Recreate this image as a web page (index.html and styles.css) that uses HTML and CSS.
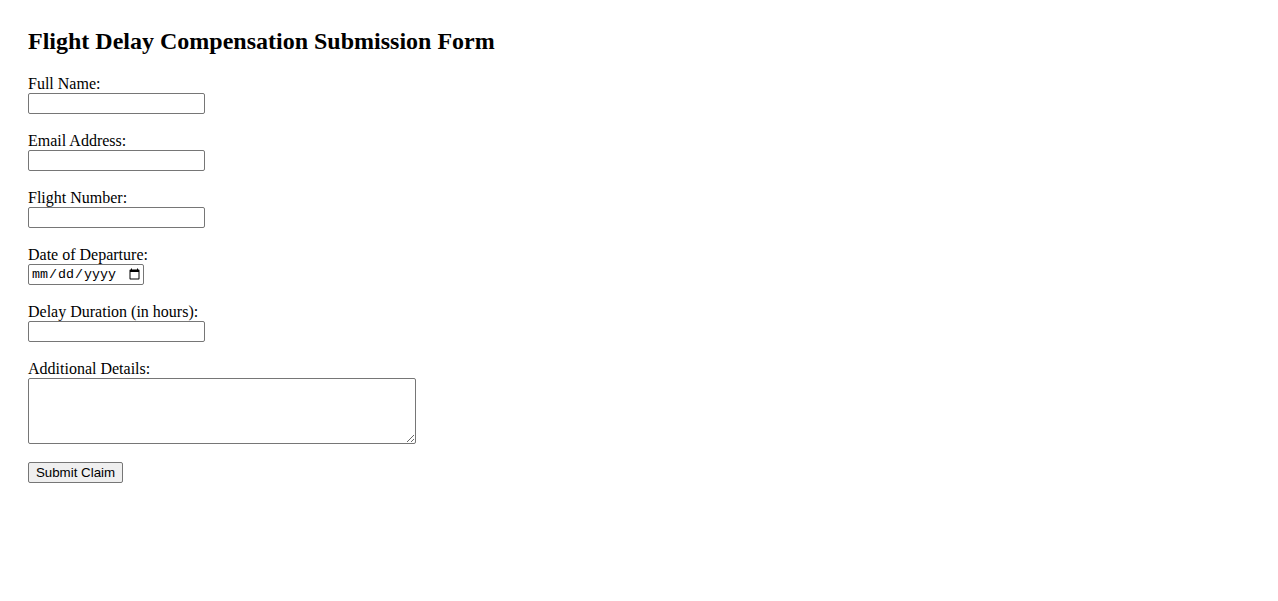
FILE: index.html
```html
<!DOCTYPE html>
<html lang="en">
<head>
<meta charset="utf-8">
<title>Flight Delay Compensation Submission Form</title>
<link rel="stylesheet" href="styles.css">
</head>
<body>
<div class="page">
  <h2 class="title">Flight Delay Compensation Submission Form</h2>
  <form class="claim-form">
    <div class="field">
      <label class="label" for="name">Full Name:</label>
      <input class="text-input" type="text" id="name">
    </div>
    <div class="field">
      <label class="label" for="email">Email Address:</label>
      <input class="text-input" type="email" id="email">
    </div>
    <div class="field">
      <label class="label" for="flight">Flight Number:</label>
      <input class="text-input" type="text" id="flight">
    </div>
    <div class="field">
      <label class="label" for="date">Date of Departure:</label>
      <input class="date-input" type="date" id="date">
    </div>
    <div class="field">
      <label class="label" for="delay">Delay Duration (in hours):</label>
      <input class="text-input" type="number" id="delay">
    </div>
    <div class="field field-area">
      <label class="label" for="details">Additional Details:</label>
      <textarea class="area" id="details"></textarea>
    </div>
    <button class="submit" type="submit">Submit Claim</button>
  </form>
</div>
</body>
</html>
```

FILE: styles.css
```css
html, body {
  margin: 0;
  padding: 0;
  background: #ffffff;
}

.page {
  padding: 28px;
  font-family: "Liberation Serif", "Times New Roman", serif;
  font-size: 16px;
  color: #000000;
}

.title {
  margin: 0 0 19px 0;
  font-size: 24px;
  font-weight: bold;
  line-height: 27.6px;
}

.claim-form {
  margin: 0;
}

.field {
  margin-bottom: 17.6px;
}

.field-area {
  margin-bottom: 18px;
}

.label {
  display: block;
  line-height: 18.4px;
}

.text-input,
.date-input {
  display: block;
  box-sizing: border-box;
  height: 21px;
  margin: 0;
  padding: 1px 2px;
  border: 1px solid #767676;
  border-radius: 2px;
  background: #ffffff;
  font-family: "Liberation Sans", Arial, sans-serif;
  font-size: 13.33px;
}

.text-input {
  width: 177px;
}

.date-input {
  width: 116px;
  font-family: "Liberation Mono", "DejaVu Sans Mono", monospace;
  font-size: 13.33px;
  color: #000000;
}

.date-input::-webkit-calendar-picker-indicator {
  margin-left: 0;
  padding: 0;
}

.area {
  display: block;
  box-sizing: border-box;
  width: 388px;
  height: 66px;
  margin: 0;
  padding: 2px;
  border: 1px solid #767676;
  border-radius: 2px;
  font-family: "Liberation Mono", monospace;
  font-size: 13.33px;
  resize: both;
}

.submit {
  display: block;
  box-sizing: border-box;
  width: 95px;
  height: 21px;
  margin: 0;
  padding: 1px 6px;
  border: 1px solid #767676;
  border-radius: 2px;
  background: #efefef;
  color: #000000;
  font-family: "Liberation Sans", Arial, sans-serif;
  font-size: 13.33px;
}
```
